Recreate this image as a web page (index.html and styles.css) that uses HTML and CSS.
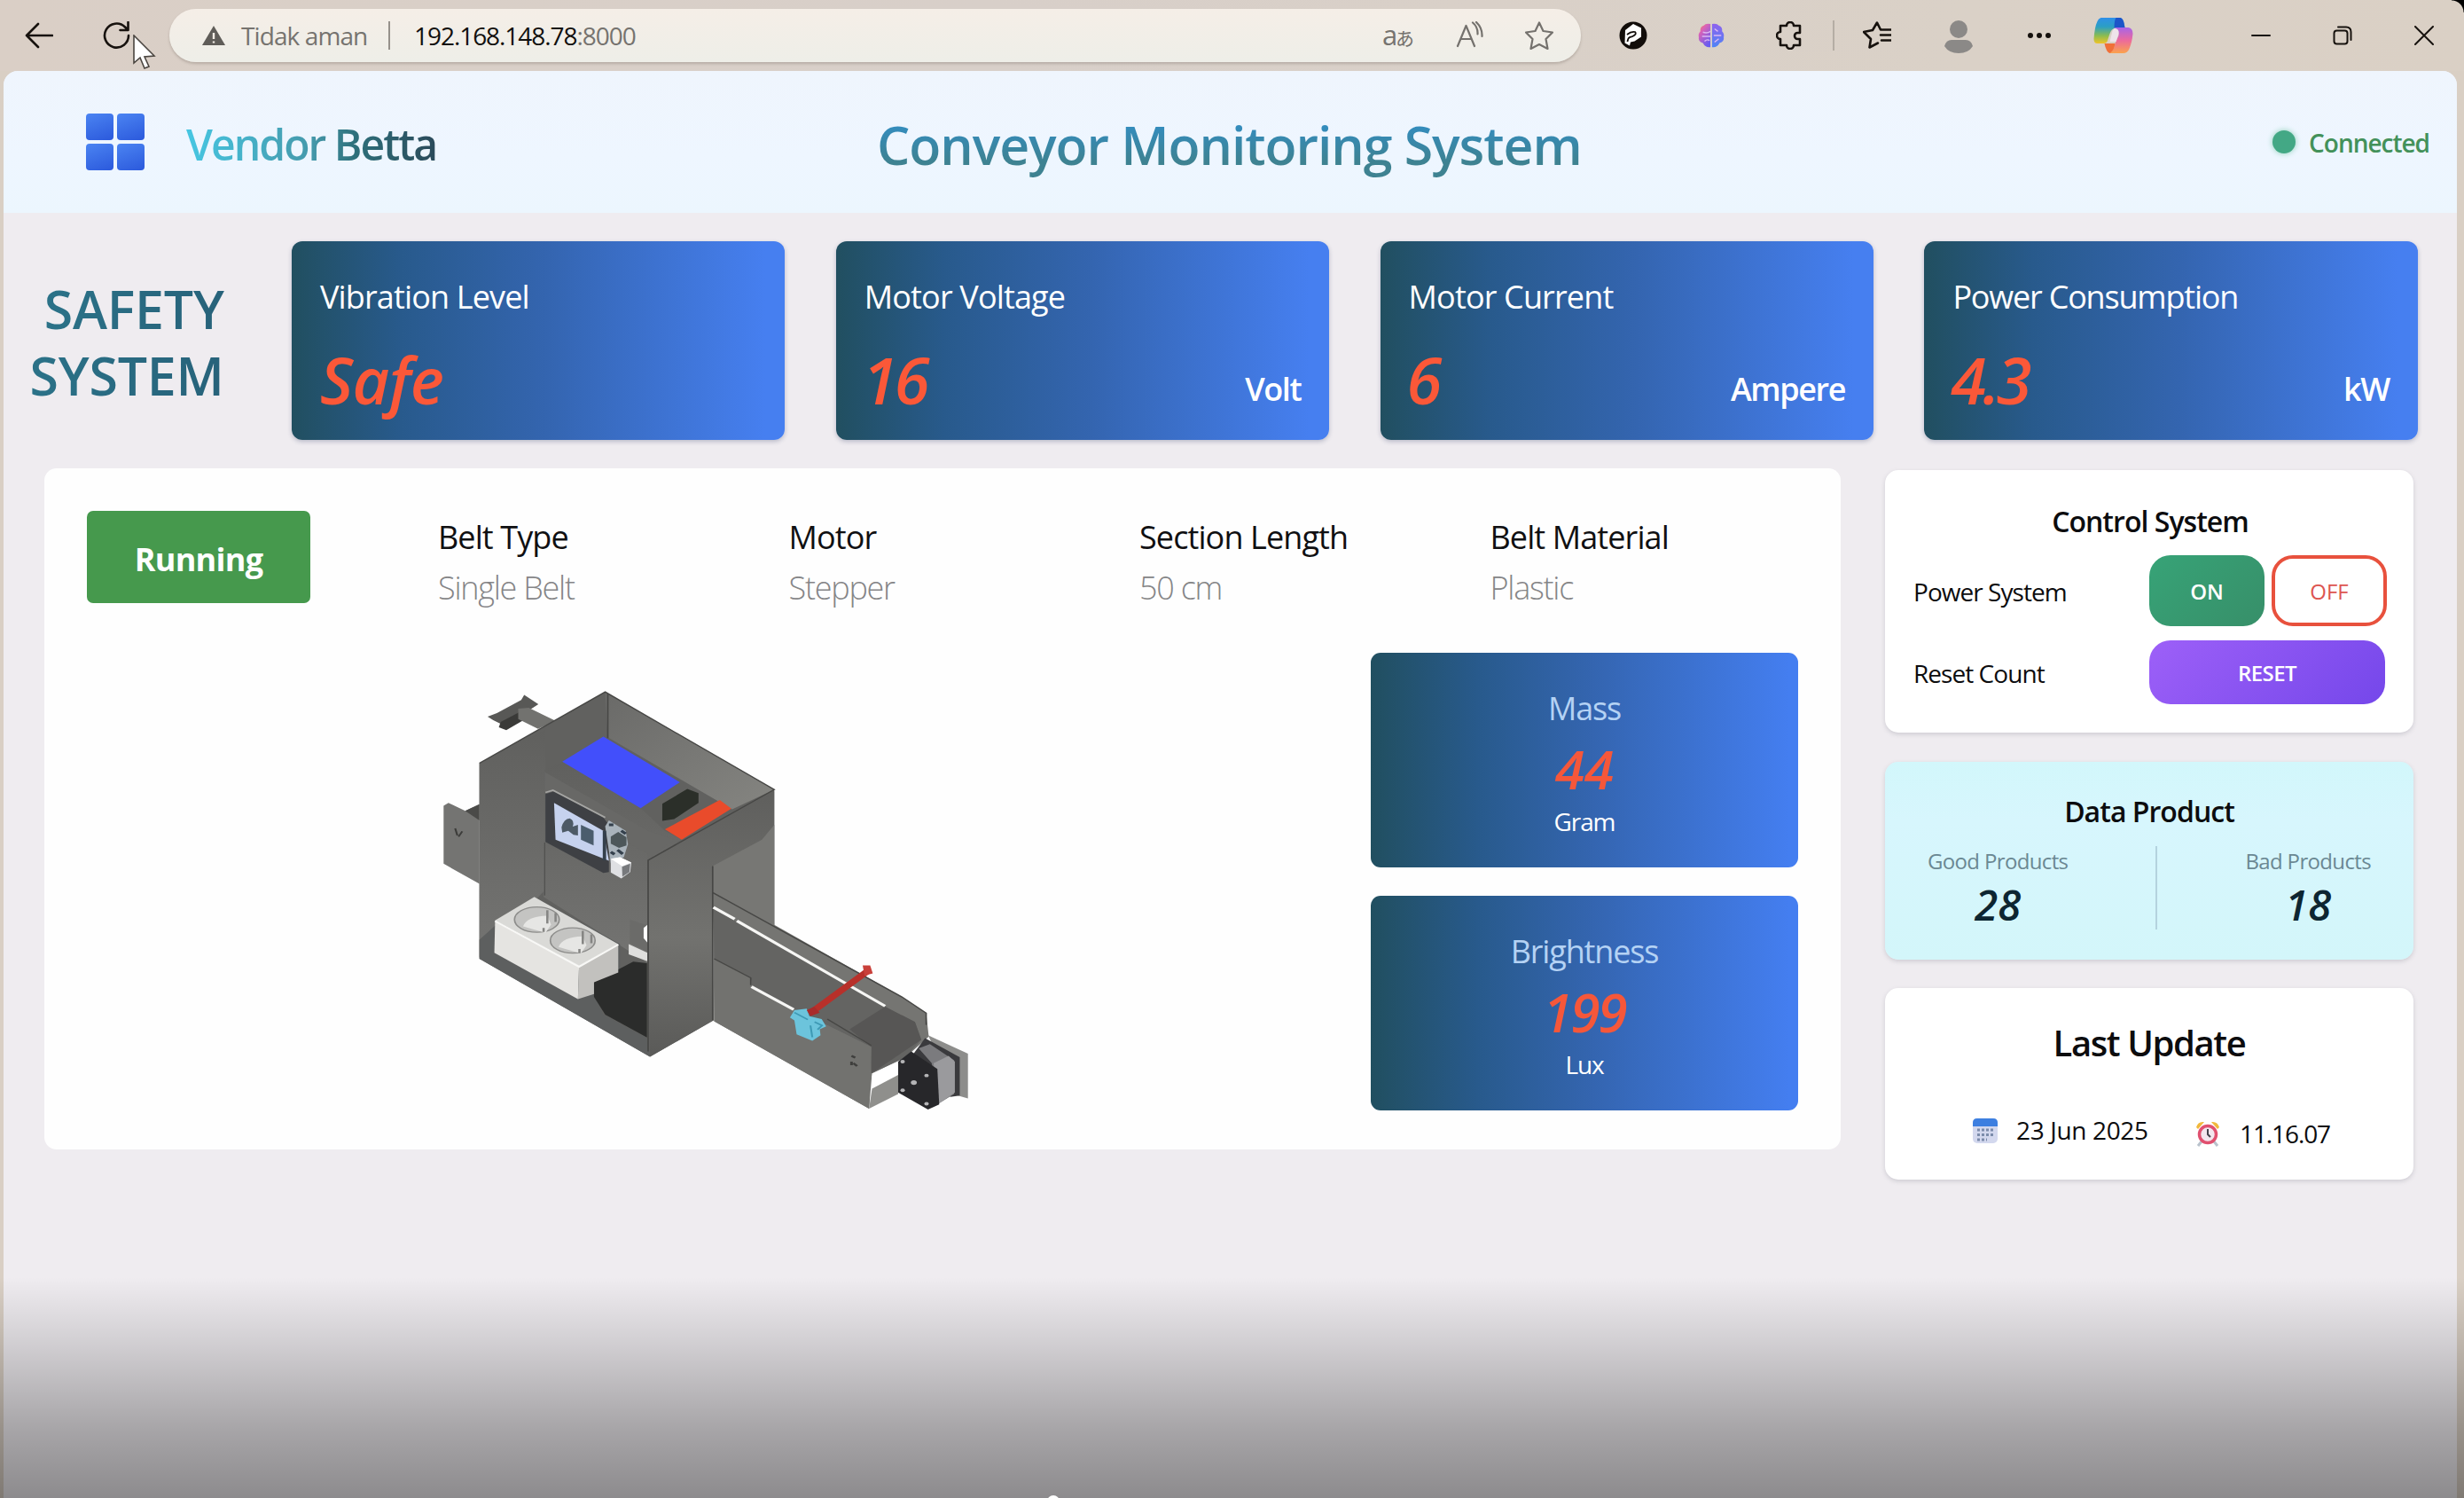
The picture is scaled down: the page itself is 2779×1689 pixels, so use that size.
FILE: index.html
```html
<!DOCTYPE html>
<html lang="id">
<head>
<meta charset="utf-8">
<title>Conveyor Monitoring System</title>
<link rel="stylesheet" href="styles.css">
</head>
<body>
<div class="window">
  <div class="toolbar">
    <svg class="icon back" viewBox="0 0 32 32"><path d="M31 16H2M15 3 2 16l13 13"/></svg>
    <svg class="icon reload" viewBox="0 0 32 32"><path d="M29 16a13.5 13.5 0 1 1-4-9.5l3 3M28.500 1v9h-9"/></svg>
    <div class="address">
      <svg class="warn" viewBox="0 0 26 22"><path d="M13 0 26 22H0Z"/><path class="mark" d="M13 8v7M13 17.500v2"/></svg>
      <span class="insecure">Tidak aman</span>
      <span class="split"></span>
      <span class="url"><span class="host">192.168.148.78</span><span class="port">:8000</span></span>
      <span class="tr-icon"><span class="tr-a">a</span><span class="tr-j">あ</span></span>
      <svg class="icon soft aloud" viewBox="0 0 32 32"><path d="M2 28 11.500 5 21 28M5.500 20h12M19 1.500q6 5 5.500 13M23 1q7 6.500 6.500 16"/></svg>
      <svg class="icon soft star" viewBox="0 0 32 32"><path d="M16 1.500 20.500 11l10.500 1.500-7.500 7.500 2 11L16 26l-9.500 5 2-11L1 12.500 11.500 11Z"/></svg>
    </div>
    <svg class="ext ext-p" viewBox="0 0 32 32"><circle cx="16" cy="16" r="15.500" fill="#120d0a"/><path d="M7 10 16 3l9 4.500v10l-7.500 5-4.500 1-1 4-5.500-3Z" fill="#fff"/><path d="M9 15q5-4 9-3 2 2-1 4-2 1.500-5 2-2 1-2.500 5" fill="none" stroke="#120d0a" stroke-width="1.800"/></svg>
    <svg class="ext ext-brain" viewBox="0 0 32 32"><defs><linearGradient id="b1" x1="0" y1="0" x2="0.600" y2="1"><stop offset="0" stop-color="#ff8a50"/><stop offset=".35" stop-color="#d862b8"/><stop offset="1" stop-color="#6a5cf0"/></linearGradient><linearGradient id="b2" x1="0" y1="0" x2="0" y2="1"><stop offset="0" stop-color="#8f62ee"/><stop offset="1" stop-color="#4f84f5"/></linearGradient></defs><path d="M15 2Q9 1 7 4 2 6 3 11 0 14 1 18q-1 5 5 7 3 6 9 5Z" fill="url(#b1)"/><path d="M17 2q6-1 8 2 5 2 4 7 3 3 2 7 1 5-5 7-3 6-9 5Z" fill="url(#b2)"/><path d="M6 12q5 2 9-1M5 17h10M8 23q3-3 6-1M20 8l4 3M19 16h9M20 24l5-4" stroke="#dcb8f2" fill="none" stroke-width="1.500"/></svg>
    <svg class="icon puzzle" viewBox="0 0 32 32"><path d="M5 5h7a4 4 0 0 1 8 0h7v8h-2.500a3.500 3.500 0 0 0 0 7H27v7h-7a4 4 0 0 1-8 0H5v-7a4 4 0 0 1 0-8Z"/></svg>
    <span class="bar"></span>
    <svg class="icon favs" viewBox="0 0 32 32"><path d="M21 9.500h11M20 15.500h12M21 21.500h11M17 24.500l-9.500 5 1.500-9.500-8-8 10-2 5-8.500 4 8"/></svg>
    <svg class="person" viewBox="0 0 32 40"><circle cx="16" cy="11" r="10"/><path d="M0 30q2-7 8-7h16q6 0 8 7-5 8-16 8T0 30Z"/></svg>
    <svg class="dots" viewBox="0 0 28 8"><circle cx="4" cy="4" r="3"/><circle cx="14" cy="4" r="3"/><circle cx="24" cy="4" r="3"/></svg>
    <svg class="copilot" viewBox="0 0 44 42"><defs><linearGradient id="c1" x1="0" y1="0" x2="0" y2="1"><stop offset="0" stop-color="#2f8fe8"/><stop offset=".35" stop-color="#2b9fc4"/><stop offset=".7" stop-color="#8cbc50"/><stop offset="1" stop-color="#f0c428"/></linearGradient><linearGradient id="c2" x1="0" y1="0" x2="0" y2="1"><stop offset="0" stop-color="#a864e8"/><stop offset=".5" stop-color="#ec6a9c"/><stop offset="1" stop-color="#fba24c"/></linearGradient></defs><path d="M8 1h22q3 1 4 6l1 6H24q-4 0-6 6l-3 9q-1 2-4 2H4q-4 0-4-5Q1 11 4 5q1-3 4-4Z" fill="url(#c1)"/><path d="M25 1h5q3 1 4 6l1 5H23q0-8 2-11Z" fill="#1c55c8"/><path d="M23 12h16q5 1 5 7-1 10-4 17-2 5-7 5H17q6-3 7-11l4-9q1-6-5-9Z" fill="url(#c2)"/><path d="M12 30h12q-1 8-6 11-4-1-6-11Z" fill="#f07038"/><path d="M23 13q6 0 5 6l-3 9h-7l3-12q1-2 2-3Z" fill="#eee4ea"/></svg>
    <svg class="icon win min" viewBox="0 0 22 22"><path d="M1 11h20"/></svg>
    <svg class="icon win restore" viewBox="0 0 22 22"><rect x="1.500" y="5.500" width="15" height="15" rx="3"/><path d="M6 1.500h9q5.500 0 5.500 5.500v9"/></svg>
    <svg class="icon win close" viewBox="0 0 22 22"><path d="m1 1 20 20M21 1 1 21"/></svg>
    <span class="corner"></span>
    <svg class="cursor" viewBox="0 0 26 40"><path d="M1 1v31l7-6 5 12 5-2-5-11 11-1Z"/></svg>
  </div>

  <div class="page">
    <header class="header">
      <div class="brand">
        <div class="logo"><i></i><i></i><i></i><i></i></div>
        <span class="brand-name">Vendor Betta</span>
      </div>
      <h1 class="title">Conveyor Monitoring System</h1>
      <div class="status"><span class="status-dot"></span><span class="status-text">Connected</span></div>
    </header>

    <section class="safety">
      <h2 class="safety-title"><span class="s1">SAFETY</span><span class="s2">SYSTEM</span></h2>
      <div class="metric"><div class="metric-name">Vibration Level</div><div class="metric-row"><span class="metric-value word">Safe</span></div></div>
      <div class="metric"><div class="metric-name">Motor Voltage</div><div class="metric-row"><span class="metric-value">16</span><span class="metric-unit">Volt</span></div></div>
      <div class="metric"><div class="metric-name">Motor Current</div><div class="metric-row"><span class="metric-value">6</span><span class="metric-unit">Ampere</span></div></div>
      <div class="metric"><div class="metric-name wide">Power Consumption</div><div class="metric-row"><span class="metric-value">4.3</span><span class="metric-unit">kW</span></div></div>
    </section>

    <div class="main">
      <section class="panel">
        <div class="info">
          <div class="running"><span>Running</span></div>
          <div class="spec"><span class="spec-name">Belt Type</span><span class="spec-value">Single Belt</span></div>
          <div class="spec"><span class="spec-name">Motor</span><span class="spec-value">Stepper</span></div>
          <div class="spec"><span class="spec-name">Section Length</span><span class="spec-value">50 cm</span></div>
          <div class="spec"><span class="spec-name">Belt Material</span><span class="spec-value">Plastic</span></div>
        </div>
        <div class="lower">
          <svg class="machine" viewBox="0 0 1568 1568" preserveAspectRatio="none">
            <defs>
              <linearGradient id="side" x1="0" y1="0" x2="0" y2="1"><stop offset="0" stop-color="#5f5f5d"/><stop offset=".55" stop-color="#72726f"/><stop offset="1" stop-color="#5a5a58"/></linearGradient>
              <linearGradient id="wall" x1="0" y1="0" x2="1" y2="1"><stop offset="0" stop-color="#6a6a68"/><stop offset="1" stop-color="#858581"/></linearGradient>
              <linearGradient id="inner" x1="0" y1="0" x2="0" y2="1"><stop offset="0" stop-color="#60605e"/><stop offset="1" stop-color="#747472"/></linearGradient>
            </defs>
            <path d="M72 475 85 465l45 27 38-22v270L72 672Z" fill="#747472"/>
            <path d="M130 492l38-22v55Z" fill="#4a4a48"/>
            <path d="M103 552l6 24M122 562l-10 18" stroke="#3c3c3a" stroke-width="5"/>
            <path d="M190 172 215 160l65-45 8-17 38 32-22 18-14 18-50 40-35-22Z" fill="#585856"/>
            <path d="M225 190 285 150v35l-45 33-20-10Z" fill="#3a3a38"/>
            <path d="M272 145 300 142 372 186 325 213 272 180Z" fill="#72726f"/>
            <path d="M168 330 505 88 958 420 958 885 793 770 795 1205 625 1328 168 995Z" fill="#61615f"/>
            <path d="M168 330 345 215V760L168 990Z" fill="url(#inner)"/>
            <path d="M505 88 958 420 845 487 512 242Z" fill="url(#wall)"/>
            <path d="M343 352 392 325 600 483 665 560 710 590 620 660V1010L340 785Z" fill="url(#inner)"/>
            <path d="M343 360 620 560 690 590 620 655 620 640 343 430Z" fill="#686866"/>
            <path d="M500 240 705 395 600 483 390 325Z" fill="#424ffb"/>
            <path d="M658 468 725 418 755 432V465L690 520 658 526Z" fill="#2b2f29"/>
            <path d="M665 555 812 455 843 485 710 590Z" fill="#e94b2b"/>
            <path d="M345 435 370 425 500 515 515 540V700L500 703 345 598Z" fill="#3e4044"/>
            <path d="M345 430 365 422 505 515" fill="none" stroke="#a5a5a3" stroke-width="5"/>
            <path d="M368 465 500 560 515 662 372 590Z" fill="#c6d2ee"/>
            <path d="M388 548q6-28 22-30 14 8 8 28l14-6v36l-12-2-14-14-16 6Z" fill="#4d5a66"/><path d="M440 540l34 20v50l-34-20Z" fill="#4b5d6d"/>
            <path d="M505 545 515 525 560 560 566 605 555 650 520 670Z" fill="#a9b3bb"/><path d="M520 580l20-16 22 18v28l-20 8-22-14Z" fill="#4d575a"/><path d="M503 560v100M515 540h12M520 632l10 8M538 625l14 14M548 560l12 10" stroke="#34404c" stroke-width="9"/>
            <path d="M520 655 545 650 575 668 572 700 548 722 520 702Z" fill="#dfe0e3"/><path d="M550 682 572 672 570 700 551 716Z" fill="#77797c"/><path d="M520 655 545 650 575 668 550 680Z" fill="#fff"/>
            <path d="M343 600V780" stroke="#51514f" stroke-width="3"/>
            <path d="M208 885 315 785 545 945 545 1060 475 1115 500 1185 617 1265 625 1328 168 995V930Z" fill="#5d5f5f"/>
            <path d="M475 1075 580 1005 617 1010V1263L505 1185 475 1125Z" fill="#2b2c2b"/>
            <path d="M568 860V945L618 975V1003L568 980Z" fill="#dfdfdd"/><path d="M571 862 618 882V972L571 942Z" fill="#6b6b69"/><path d="M608 890 618 880V940L608 925Z" fill="#fff"/>
            <path d="M315 785 540 945 435 1020 210 865Z" fill="#dadad7"/>
            <path d="M210 865 435 1020 432 1132 208 975Z" fill="#e5e4e1"/>
            <path d="M435 1020 540 945V1042L475 1075V1115L432 1132Z" fill="#c2c1be"/>
            <path d="M210 867 435 1022 540 947" fill="none" stroke="#f8f8f6" stroke-width="6"/>
            <g fill="#c4c4c2" stroke="#8d8d8b" stroke-width="4"><ellipse cx="322" cy="862" rx="60" ry="43"/><ellipse cx="418" cy="933" rx="60" ry="43"/></g>
            <g fill="#e6e6e4"><path d="M285 885q10-34 65-36l10 30-15 28Z"/><path d="M380 955q10-34 65-36l10 30-15 28Z"/></g>
            <path d="M350 830v45M445 900v45M340 890v14M436 962v14M372 840v30M468 912v30" stroke="#858583" stroke-width="6"/>
            <path d="M793 770 958 880 1300 1125 1365 1180 1372 1260 1310 1330 1220 1385 1212 1505 797 1208Z" fill="#757572"/>
            <path d="M795 825 1255 1158 1335 1210 1352 1270 1310 1330 1218 1385V1295L900 1095 895 1060 797 995Z" fill="#646462"/>
            <path d="M1160 1235 1255 1158 1335 1210 1352 1270 1218 1385V1295Z" fill="#575655"/>
            <path d="M797 995 895 1060 900 1095 1010 1165 1218 1295 1212 1505 797 1208Z" fill="#72726f"/>
            <path d="M620 660 958 425V880L793 768 795 1205 625 1328Z" fill="url(#side)"/>
            <path d="M793 680 925 590 958 540V885L793 770Z" fill="#777774"/>
            <path d="M168 330 505 88 958 420 620 660V1310M512 92V245M793 770 1300 1125 1365 1180V1220M797 995 895 1060V1085M1100 1200 1218 1290M793 680V1205" fill="none" stroke="#474745" stroke-width="4"/>
            <path d="M795 820 852 860M858 866 1255 1156M897 1090 1010 1168" stroke="#f6f6f4" stroke-width="9"/>
            <path d="M1060 1175 1205 1040" stroke="#b8302a" stroke-width="20"/><path d="M1195 1018 1215 1018 1222 1045 1200 1052Z" fill="#c9403a"/>
            <path d="M1000 1195 1012 1170 1045 1165 1052 1190 1085 1200 1097 1225 1080 1235 1082 1255 1060 1274 1018 1252 1012 1205Z" fill="#6cc4dc"/><path d="M1012 1178l36 24M1066 1210l20 12-12 14M1055 1222l5 40" fill="none" stroke="#3e9ab5" stroke-width="5"/><path d="M1045 1170l20-12 15 20-25 12Z" fill="#a92b2b"/>
            <path d="M1165 1325l10 6M1170 1350l10 10M1165 1345v12" stroke="#3f3f3d" stroke-width="7"/>
            <path d="M1220 1392 1292 1348V1385L1220 1435Z" fill="#fff"/><path d="M1220 1437 1290 1390V1455L1212 1505Z" fill="#8f8f8c"/>
            <path d="M1370 1255 1477 1318V1470L1450 1460Z" fill="#8d8d8b"/>
            <path d="M1362 1265 1455 1330V1460L1430 1465 1330 1320Z" fill="#3a3a3d"/>
            <path d="M1345 1300 1375 1285 1440 1340V1455L1395 1490 1380 1350Z" fill="#7b7b7e"/><path d="M1385 1350 1425 1325 1442 1345V1450L1395 1490Z" fill="#9a9a9d"/>
            <path d="M1290 1345 1325 1310 1395 1370 1400 1490 1370 1508 1290 1450Z" fill="#27272a"/>
            <g fill="#b4b4b6"><circle cx="1302" cy="1345" r="6"/><circle cx="1366" cy="1392" r="6"/><circle cx="1302" cy="1442" r="6"/><circle cx="1366" cy="1488" r="6"/><circle cx="1332" cy="1416" r="8"/></g>
          </svg>
          <div class="readings">
            <div class="reading"><span class="reading-name">Mass</span><span class="reading-value">44</span><span class="reading-unit">Gram</span></div>
            <div class="reading"><span class="reading-name">Brightness</span><span class="reading-value long">199</span><span class="reading-unit">Lux</span></div>
          </div>
        </div>
      </section>

      <aside class="side">
        <section class="card control">
          <h3 class="card-title">Control System</h3>
          <div class="control-row"><span class="label">Power System</span><button class="btn on">ON</button><button class="btn off">OFF</button></div>
          <div class="control-row"><span class="label">Reset Count</span><button class="btn reset">RESET</button></div>
        </section>
        <section class="card data">
          <h3 class="card-title">Data Product</h3>
          <div class="counts">
            <div class="count"><span class="count-name">Good Products</span><span class="count-value">28</span></div>
            <span class="count-split"></span>
            <div class="count"><span class="count-name">Bad Products</span><span class="count-value">18</span></div>
          </div>
        </section>
        <section class="card update">
          <h3 class="update-title">Last Update</h3>
          <div class="stamps">
            <svg class="calendar" viewBox="0 0 30 30"><rect x="1" y="1" width="28" height="28" rx="5" fill="#d3d8ee"/><path d="M1 10V6q0-5 5-5h18q5 0 5 5v4Z" fill="#3d7fe0"/><path d="M6 14h18M6 19.500h18M6 25h11" stroke="#7c8cab" stroke-width="3" stroke-dasharray="3 2"/></svg>
            <span class="stamp date">23 Jun 2025</span>
            <svg class="alarm" viewBox="0 0 28 30"><path d="M1 8Q3 1 10 2L3 10ZM27 8Q25 1 18 2l7 8Z" fill="#f1b83c"/><path d="M7 24 3 29M21 24l4 5" stroke="#b9c2cc" stroke-width="3"/><circle cx="14" cy="16" r="9.500" fill="#f3e6ee" stroke="#e0506f" stroke-width="3.500"/><path d="M14 10v6l3 3" fill="none" stroke="#44424c" stroke-width="2"/></svg>
            <span class="stamp time">11.16.07</span>
          </div>
        </section>
      </aside>
    </div>
  </div>
  <div class="shade"></div>
  <div class="handle"></div>
</div>
</body>
</html>
```
FILE: styles.css
```css
* { box-sizing: border-box; }
body {
  margin: 0;
  width: 2779px;
  height: 1689px;
  overflow: hidden;
  font-family: "Open Sans", "Noto Sans", sans-serif;
  color: #0c0c0e;
}
h1, h2, h3 { margin: 0; font-weight: 600; }
svg { display: block; flex: none; }
span { white-space: nowrap; }

.window { position: relative; height: 1689px; background: #d9cfc4; overflow: hidden; }

/* Browser toolbar */
.toolbar { position: relative; height: 80px; display: flex; align-items: center; padding-left: 28px; background: linear-gradient(90deg, #dacfc6, #d8cfc9 40%, #dad1c7 80%, #dad0c5); }
.icon { width: 32px; height: 32px; fill: none; stroke: #17120e; stroke-width: 2.6; stroke-linecap: round; stroke-linejoin: round; }
.soft { stroke: #74716d; stroke-width: 2.2; }
.reload { margin-left: 56px; }
.address { display: flex; align-items: center; width: 1592px; height: 60px; margin-left: 43px; padding-left: 37px; border-radius: 30px; background: linear-gradient(#f5eee7, #eeeee8); box-shadow: 0 2px 3px rgba(120, 110, 100, .35); font-size: 28px; line-height: 60px; color: #76736f; }
.warn { width: 26px; height: 22px; fill: #5f5c58; }
.warn .mark { stroke: #f3ede6; stroke-width: 2.4; }
.insecure { margin-left: 18px; width: 166px; letter-spacing: -.9px; }
.split { width: 2px; height: 32px; background: #96918b; }
.url { margin-left: 27px; letter-spacing: -1.05px; }
.host { color: #12100e; }
.tr-icon { margin-left: auto; width: 83px; display: flex; align-items: baseline; line-height: 40px; }
.tr-a { width: 15px; font-size: 31px; }
.tr-j { font-size: 21px; font-family: "Noto Sans CJK JP", sans-serif; }
.aloud { margin-right: 46px; }
.star { margin-right: 31px; }
.ext-p { width: 32px; height: 32px; margin-left: 43px; }
.ext-brain { width: 30px; height: 32px; margin-left: 57px; }
.puzzle { margin-left: 58px; }
.bar { width: 2px; height: 34px; margin-left: 32px; background: #b5ada4; }
.favs { margin-left: 32px; }
.person { width: 32px; height: 40px; margin: 3px 0 0 60px; fill: #8b8987; }
.dots { width: 28px; height: 8px; margin-left: 61px; fill: #14100d; }
.copilot { width: 45px; height: 42px; margin-left: 47px; }
.win { width: 22px; height: 22px; stroke-width: 2; }
.min { margin-left: 133px; }
.restore { margin-left: 70px; }
.close { margin-left: 70px; }
.corner { position: absolute; right: 0; top: 0; width: 14px; height: 14px; background: radial-gradient(circle at 0 100%, transparent 13px, #000 14px); }
.cursor { position: absolute; left: 150px; top: 39px; width: 26px; height: 40px; fill: #fff; stroke: #4a4540; stroke-width: 1.6; }

/* Page */
.page { height: 1609px; margin: 0 8px 0 4px; border-radius: 16px 16px 0 0; background: #efecf0; overflow: hidden; }
.header { display: flex; align-items: flex-start; height: 160px; padding-right: 31px; background: linear-gradient(#eff5fd, #eef6ff 60%, #ecf6fe); }
.brand { display: flex; width: 985px; padding-left: 93px; }
.logo { display: grid; grid-template-columns: 31px 31px; grid-auto-rows: 30px; gap: 4px; margin-top: 48px; }
.logo i { border-radius: 4px; background: linear-gradient(160deg, #4b84f2, #2b59dc); }
.brand-name { margin: 51px 0 0 47px; font-size: 48px; line-height: 64px; font-weight: 600; letter-spacing: -1.95px; color: transparent; background: linear-gradient(90deg, #46c6e2, #4599ab 50%, #2d6f7a 68%, #2b4a5a); background-clip: text; }
.title { margin-top: 43px; font-size: 59px; line-height: 80px; letter-spacing: -1.06px; color: transparent; background: linear-gradient(#348cbc 25%, #3e8291 75%); background-clip: text; white-space: nowrap; }
.status { display: flex; margin: 63px 0 0 auto; font-size: 28px; line-height: 36px; font-weight: 600; letter-spacing: -1.02px; color: #43915a; }
.status-dot { width: 26px; height: 26px; margin: 4px 15px 0 0; border-radius: 50%; background: #43a885; box-shadow: 0 0 6px #8ccfb6; }

.safety { display: grid; grid-template-columns: 267.7px repeat(4, 556.5px); column-gap: 57.3px; height: 256px; padding-top: 32px; }
.safety-title { display: flex; flex-direction: column; align-items: flex-end; padding: 39px 19px 0 0; font-size: 59px; line-height: 75px; letter-spacing: -.2px; }
.s1, .s2 { color: transparent; background: linear-gradient(90deg, #2b7288, #27627a); background-clip: text; }
.metric { height: 224px; padding: 38.5px 32px 0; border-radius: 12px; color: #fff; background: linear-gradient(90deg, #214f60, #285a8c 22%, #3465b0 52%, #467ff0 96%); box-shadow: 0 2px 5px rgba(60, 70, 110, .3); }
.metric-name { font-size: 36px; line-height: 48px; letter-spacing: -.85px; }
.metric-name.wide { letter-spacing: -1.2px; }
.metric-row { display: flex; justify-content: space-between; margin-top: 21px; }
.metric-value { margin-left: -2px; font-size: 72px; line-height: 96px; font-style: italic; font-weight: 600; letter-spacing: -3.8px; color: #fb5838; }
.metric-value.word { margin-left: 0; letter-spacing: -.6px; }
.metric-unit { margin-top: 35px; font-size: 36px; line-height: 48px; font-weight: 600; letter-spacing: -1.4px; }

.main { display: flex; align-items: flex-start; padding: 32px 0 0 46px; gap: 50px; }
.panel { width: 2026px; height: 768px; padding: 48px 0 0 47px; border-radius: 14px; background: #fefefe; }
.info { display: grid; grid-template-columns: 397px repeat(4, 395.5px); height: 104px; }
.running { width: 252px; height: 104px; margin-left: 1px; border-radius: 7px; background: #46994d; color: #fff; text-align: center; font-size: 36px; line-height: 109px; font-weight: 700; letter-spacing: -.73px; }
.spec { display: flex; flex-direction: column; gap: 9px; padding-top: 6px; font-size: 36px; line-height: 48px; }
.spec-name { color: #101012; letter-spacing: -.9px; }
.spec-value { font-weight: 300; color: #858587; letter-spacing: -1.25px; }
.lower { display: flex; align-items: flex-start; justify-content: space-between; margin-top: 56px; padding: 0 48px 0 373px; }
.machine { width: 660px; height: 520px; margin-top: 15px; }
.readings { display: grid; gap: 32px; width: 482px; }
.reading { display: flex; flex-direction: column; align-items: center; height: 242px; padding-top: 38.5px; border-radius: 11px; color: #fff; background: linear-gradient(90deg, #214f60, #285a8c 25%, #3465b0 52%, #447ef0 98%); }
.reading-name { font-size: 36px; line-height: 48px; letter-spacing: -1.15px; color: #b4d2f4; }
.reading-value { margin-top: 4px; font-size: 60px; line-height: 80px; font-style: italic; font-weight: 600; color: #f5573a; }
.reading-value.long { letter-spacing: -2px; }
.reading-unit { margin-top: 1px; font-size: 28px; line-height: 36px; font-weight: 500; letter-spacing: -1.1px; }

.side { display: grid; gap: 32.5px; width: 596px; padding-top: 2px; }
.card { border-radius: 15px; background: #fff; box-shadow: 0 2px 5px rgba(90, 90, 110, .22); }
.card-title { font-size: 32px; line-height: 44px; letter-spacing: -.97px; text-align: center; }
.control { height: 296px; padding: 36px 30px 0 32px; }
.control-row { display: flex; align-items: center; gap: 8px; margin-top: 16px; font-size: 28px; line-height: 36px; }
.card-title + .control-row { margin-top: 16px; }
.label { margin-right: auto; padding-top: 1px; letter-spacing: -.95px; }
.btn { width: 130px; height: 80px; padding: 1px 0 0; border: 0; border-radius: 24px; font: 600 24px/36px "Open Sans", sans-serif; color: #fff; }
.on { background: linear-gradient(135deg, #37a377, #378f69); }
.off { background: #fff; border: 4px solid #e8513d; color: #dd5550; font-weight: 500; }
.reset { width: 266px; height: 72px; margin-right: 2px; letter-spacing: -.58px; background: linear-gradient(135deg, #9d60f8, #7547ea); }
.data { height: 223px; padding: 34.5px 48px 0; background: linear-gradient(#d2f7fb, #d7f6fd 30%, #d3f6fa); }
.counts { display: flex; justify-content: space-between; margin-top: 17px; }
.count { display: flex; flex-direction: column; align-items: center; padding-top: 1px; }
.count-name { font-size: 24px; line-height: 32px; letter-spacing: -.65px; color: #6b8893; }
.count-value { margin-top: 3px; font-size: 47px; line-height: 60px; font-style: italic; font-weight: 600; color: #0d2531; }
.count-split { width: 2px; height: 94px; background: #b4d3de; }
.update { height: 216px; padding-top: 33.5px; }
.update-title { font-size: 40px; line-height: 56px; letter-spacing: -1.4px; text-align: center; }
.stamps { display: flex; align-items: flex-start; margin-top: 52px; padding-left: 98px; }
.calendar { width: 30px; height: 30px; margin: 4px 20px 0 0; }
.stamp { font-size: 28px; line-height: 36px; }
.date { width: 202px; letter-spacing: -.35px; }
.alarm { width: 28px; height: 30px; margin: 7px 22px 0 0; }
.time { margin-top: 4px; letter-spacing: -1.1px; }

/* Player overlay */
.shade { position: absolute; left: 0; right: 0; bottom: 0; height: 249px; background: linear-gradient(rgba(0,0,0,0), rgba(0,0,0,.12) 29%, rgba(0,0,0,.21) 49%, rgba(0,0,0,.3) 69%, rgba(0,0,0,.41)); }
.handle { position: absolute; left: 1181px; top: 1686px; width: 14px; height: 14px; border-radius: 50%; background: #fff; }
```
